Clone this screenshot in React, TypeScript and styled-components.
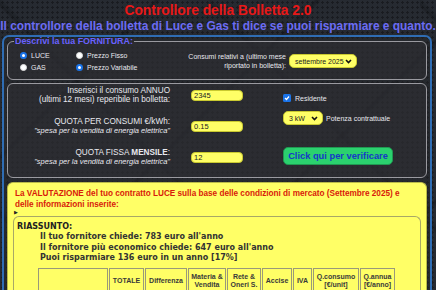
import React from 'react'
import styled, { createGlobalStyle } from 'styled-components'

const GlobalStyle = createGlobalStyle`
    html, body {
        margin: 0;
        padding: 0;
    }
    body {
        width: 436px;
        height: 290px;
        overflow: hidden;
        font-family: "Liberation Sans", Arial, sans-serif;
        background-color: #262a31;
        background-image:
            radial-gradient(rgba(0, 0, 0, 0.35) 1px, transparent 1.2px),
            linear-gradient(135deg, transparent 48%, rgba(0, 0, 0, 0.25) 49%, transparent 51%),
            linear-gradient(45deg, transparent 48%, rgba(0, 0, 0, 0.2) 49%, transparent 51%);
        background-size: 5px 5px, 160px 160px, 210px 210px;
    }
`

const Page = styled.div`
    display: flex;
    flex-direction: column;
    align-items: stretch;
`

const Title = styled.h1`
    margin: 3px 0 0;
    text-align: center;
    font-size: 13.8px;
    line-height: 16px;
    font-weight: bold;
    color: #e81818;
`

const Subtitle = styled.h2`
    margin: 0;
    text-align: center;
    font-size: 11.9px;
    line-height: 14px;
    font-weight: bold;
    color: #6c6cf4;
    white-space: nowrap;
`

const Container = styled.div`
    margin: 2px 0 0 2px;
    width: 420px;
    border: 2px solid #2f6db4;
    border-bottom: none;
    border-radius: 7px 7px 0 0;
    padding: 0 3px;
    display: flex;
    flex-direction: column;
    gap: 3px;
    background: rgba(40, 40, 44, 0.35);
`

const Fieldset = styled.fieldset<{ $bottom: number }>`
    margin: 0;
    padding: 0 8px ${p => p.$bottom}px;
    border: 1px solid #9a9aa0;
    border-radius: 6px;
    background: rgba(48, 48, 52, 0.55);
    font-size: 7px;
    color: #e8e8ee;
`

const Legend = styled.legend`
    padding: 0 1px;
    margin-left: -2px;
    color: #6a62ff;
    font-weight: bold;
    font-size: 8.9px;
    line-height: 9px;
`

const SupplyRow = styled.div`
    display: flex;
    align-items: center;
    height: 30px;
    padding-left: 4px;
`

const RadioGroup = styled.div<{ $width: number }>`
    width: ${p => p.$width}px;
    display: flex;
    flex-direction: column;
    gap: 3px;
`

const RadioLabel = styled.label`
    display: flex;
    align-items: center;
    gap: 4px;
    line-height: 9px;
`

const Radio = styled.span<{ $on?: boolean }>`
    width: 7px;
    height: 7px;
    border-radius: 50%;
    box-sizing: border-box;
    background: #fff;
    border: ${p => (p.$on ? '2.3px solid #1a73e8' : '1px solid #ddd')};
`

const MonthLabel = styled.div`
    width: 130px;
    text-align: right;
    line-height: 9px;
    white-space: nowrap;
`

const YellowSelect = styled.div<{ $width: number }>`
    width: ${p => p.$width}px;
    height: 14px;
    box-sizing: border-box;
    background: #ffff66;
    border: 1px solid #c9c930;
    border-radius: 5px;
    color: #222;
    font-size: 7px;
    white-space: nowrap;
    display: flex;
    align-items: center;
    justify-content: space-between;
    padding: 0 4px 0 5px;
    flex-shrink: 0;
`

const Chevron = () => (
    <svg width="7" height="5" viewBox="0 0 7 5">
        <path d="M1 1 L3.5 3.5 L6 1" stroke="#111" strokeWidth="1.6" fill="none" />
    </svg>
)

const DataGrid = styled.div`
    display: grid;
    grid-template-columns: 164px 103px 1fr;
    grid-template-rows: repeat(3, 22px);
    row-gap: 9px;
    align-items: center;
`

const FieldLabel = styled.div`
    text-align: right;
    font-size: 8.2px;
    line-height: 9px;
    padding-right: 10px;
    margin-left: -20px;
    white-space: nowrap;
`

const Hint = styled.span`
    font-style: italic;
    font-size: 7.5px;
`

const TextInput = styled.div`
    width: 52px;
    height: 11px;
    box-sizing: border-box;
    background: #ffff66;
    border: 1px solid #c9c930;
    border-radius: 4px;
    color: #222;
    font-size: 7.5px;
    line-height: 9px;
    padding-left: 2px;
    margin-left: 11px;
`

const SideColumn = styled.div`
    grid-column: 3;
    grid-row: 1 / 4;
    align-self: start;
    display: flex;
    flex-direction: column;
    align-items: flex-start;
    padding-top: 10px;
`

const SideRow = styled.div<{ $top: number }>`
    display: flex;
    align-items: center;
    gap: 3px;
    margin-top: ${p => p.$top}px;
`

const Checkbox = styled.span`
    width: 8px;
    height: 8px;
    margin-right: 1px;
    border-radius: 1.5px;
    background: #1a73e8;
    display: flex;
    align-items: center;
    justify-content: center;
`

const VerifyButton = styled.button`
    height: 18px;
    width: 110px;
    border: 1px solid #1f9a52;
    border-radius: 5px;
    background: #2bd16e;
    color: #1638c8;
    font-family: "Liberation Sans", Arial, sans-serif;
    font-weight: bold;
    font-size: 9.3px;
    padding: 0;
`

const Result = styled.div`
    margin-top: 1px;
    background: #ffff66;
    border: 1px solid #b9b94a;
    border-bottom: none;
    border-radius: 6px 6px 0 0;
    padding: 5px 5px 0;
    font-size: 8.2px;
    color: #222;
`

const Verdict = styled.p`
    margin: 0 0 0 2px;
    width: 392px;
    color: #d81a0a;
    font-weight: bold;
    line-height: 11px;
`

const Marker = styled.div`
    font-size: 5px;
    line-height: 5px;
    margin: 0 0 0 1px;
`

const Summary = styled.div`
    margin-top: 1px;
    border: 1px solid #a8a866;
    border-bottom: none;
    border-radius: 6px 6px 0 0;
    padding: 5px 3px 0;
    font-family: "DejaVu Sans", Verdana, sans-serif;
    font-size: 8px;
    font-weight: bold;
    color: #333;
`

const SummaryTitle = styled.div`
    line-height: 10px;
    color: #222;
`

const SummaryLines = styled.div`
    padding-left: 23px;
    line-height: 10.5px;
`

const Table = styled.table`
    margin: 4px 0 0 20px;
    border-collapse: separate;
    border-spacing: 1px 0;
    table-layout: fixed;
    font-family: "Liberation Sans", Arial, sans-serif;
    font-size: 7px;
    color: #3a3a3a;
`

const Cell = styled.th<{ $width: number }>`
    width: ${p => p.$width}px;
    height: 26px;
    box-sizing: border-box;
    border: 1px solid #9a9a7a;
    border-bottom: none;
    font-weight: bold;
    text-align: center;
    vertical-align: middle;
    line-height: 8.3px;
    padding: 0 1px;
    white-space: nowrap;
`

const headers: [string[], number][] = [
    [[], 70],
    [['TOTALE'], 35],
    [['Differenza'], 42],
    [['Materia &', 'Vendita'], 38],
    [['Rete &', 'Oneri S.'], 34],
    [['Accise'], 30],
    [['IVA'], 19],
    [['Q.consumo', '[€/unit]'], 46],
    [['Q.annua', '[€/anno]'], 35],
]

export default function App() {
    return (
        <>
            <GlobalStyle />
            <Page>
                <Title>Controllore della Bolletta 2.0</Title>
                <Subtitle>Il controllore della bolletta di Luce e Gas ti dice se puoi risparmiare e quanto.</Subtitle>
                <Container>
                    <Fieldset $bottom={3}>
                        <Legend>Descrivi la tua FORNITURA:</Legend>
                        <SupplyRow>
                            <RadioGroup $width={56}>
                                <RadioLabel><Radio $on />LUCE</RadioLabel>
                                <RadioLabel><Radio />GAS</RadioLabel>
                            </RadioGroup>
                            <RadioGroup $width={80}>
                                <RadioLabel><Radio />Prezzo Fisso</RadioLabel>
                                <RadioLabel><Radio $on />Prezzo Variabile</RadioLabel>
                            </RadioGroup>
                            <MonthLabel>Consumi relativi a (ultimo mese<br />riportato in bolletta):</MonthLabel>
                            <YellowSelect $width={68} style={{ marginLeft: 3 }}>
                                settembre 2025 <Chevron />
                            </YellowSelect>
                        </SupplyRow>
                    </Fieldset>
                    <Fieldset $bottom={9}>
                        <DataGrid>
                            <FieldLabel>Inserisci il consumo ANNUO<br />(ultimi 12 mesi) reperibile in bolletta:</FieldLabel>
                            <TextInput>2345</TextInput>
                            <SideColumn>
                                <SideRow $top={0}>
                                    <Checkbox>
                                        <svg width="6" height="6" viewBox="0 0 6 6">
                                            <path d="M1 3 L2.5 4.5 L5 1.5" stroke="#fff" strokeWidth="1.2" fill="none" />
                                        </svg>
                                    </Checkbox>
                                    Residente
                                </SideRow>
                                <SideRow $top={9}>
                                    <YellowSelect $width={40}>3 kW <Chevron /></YellowSelect>
                                    Potenza contrattuale
                                </SideRow>
                                <SideRow $top={22}>
                                    <VerifyButton>Click qui per verificare</VerifyButton>
                                </SideRow>
                            </SideColumn>
                            <FieldLabel>QUOTA PER CONSUMI €/kWh:<br /><Hint>"spesa per la vendita di energia elettrica"</Hint></FieldLabel>
                            <TextInput>0.15</TextInput>
                            <FieldLabel>QUOTA FISSA <b>MENSILE</b>:<br /><Hint>"spesa per la vendita di energia elettrica"</Hint></FieldLabel>
                            <TextInput>12</TextInput>
                        </DataGrid>
                    </Fieldset>
                    <Result>
                        <Verdict>
                            La VALUTAZIONE del tuo contratto LUCE sulla base delle condizioni di mercato (Settembre 2025) e delle informazioni inserite:
                        </Verdict>
                        <Marker>▶</Marker>
                        <Summary>
                            <SummaryTitle>RIASSUNTO:</SummaryTitle>
                            <SummaryLines>
                                Il tuo fornitore chiede: 783 euro all'anno<br />
                                Il fornitore più economico chiede: 647 euro all'anno<br />
                                Puoi risparmiare 136 euro in un anno [17%]
                            </SummaryLines>
                            <Table>
                                <tbody>
                                    <tr>
                                        {headers.map(([lines, w], i) => (
                                            <Cell key={i} $width={w}>
                                                {lines.map((l, j) => (
                                                    <React.Fragment key={j}>
                                                        {j > 0 && <br />}
                                                        {l}
                                                    </React.Fragment>
                                                ))}
                                            </Cell>
                                        ))}
                                    </tr>
                                </tbody>
                            </Table>
                        </Summary>
                    </Result>
                </Container>
            </Page>
        </>
    )
}
